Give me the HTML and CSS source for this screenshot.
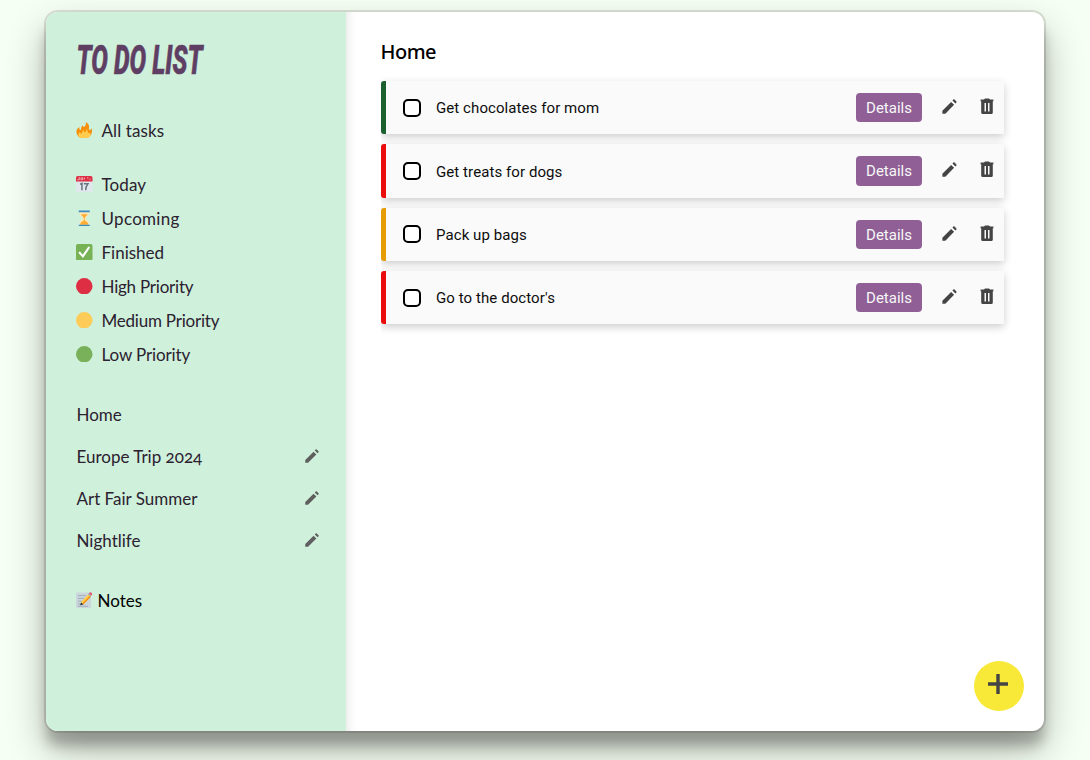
FILE: index.html
```html
<!DOCTYPE html>
<html lang="en">
<head>
<meta charset="utf-8">
<title>To Do List</title>
<link rel="stylesheet" href="styles.css">
</head>
<body>
<svg class="defs" width="0" height="0">
  <symbol id="pencil" viewBox="0 0 24 24"><path d="M20.71,7.04C21.1,6.65 21.1,6 20.71,5.63L18.37,3.29C18,2.9 17.35,2.9 16.96,3.29L15.700,4.550L19.450,8.300M3,17.25V21H6.75L17.81,9.93L14.06,6.18L3,17.25Z"/></symbol>
  <symbol id="trash" viewBox="0 0 18 18"><path fill-rule="evenodd" d="M2.600 1.500H6l1-1h4l1 1h3.400v1.800H2.600zM3.200 3.300h11.600v11.200a1.500 1.500 0 0 1-1.500 1.500H4.700a1.500 1.500 0 0 1-1.500-1.500zM6.500 5v8.500h1.500V5zM10 5v8.500h1.500V5z"/></symbol>
</svg>
<div class="app">
  <aside class="sidebar">
    <h1 class="logo"><svg width="132" height="40"><text x="-.5" y="34" textLength="126" lengthAdjust="spacingAndGlyphs">TO DO LIST</text></svg></h1>
    <ul class="filters">
      <li class="all"><svg class="emoji" viewBox="0 0 36 36"><path fill="#f4900c" d="M35 19c0-2-.5-4.300-1.300-6.300.2 3-1.300 5-3.700 4.600-3.400-.6-1-5-1.500-8.300C28 5 25 2 21 0c1.500 4 .5 7-1.500 9-2.500 2.500-4.500 1-4.500-2-4 3-4 7-4 9 0 2-3 2-3.500-.5-.3-1.500 0-3 .5-4.500C3 14 1 17 1 21c0 9 8 15 17 15s17-7 17-17z"/><path fill="#ffcc4d" d="M29 23c0 2-3 2-3 0 0-3-1-6-3-8 0 4-2 7-4 7-3 0-2-3-2-5-3 2-4 5-4 8-2 1-4-1-4-4-3 3-4 5-4 8 1 4 6 7 13 7s13-3 14-8c0-2-1-4-3-5z"/></svg><span>All tasks</span></li>
      <li class="today"><svg class="emoji" viewBox="0 0 36 36"><path fill="#e1e8ed" d="M0 9h36v23a4 4 0 0 1-4 4H4a4 4 0 0 1-4-4z"/><path fill="#dd2e44" d="M0 12V4a4 4 0 0 1 4-4h28a4 4 0 0 1 4 4v8z"/><path fill="none" stroke="#f5bec5" stroke-width="2" d="M7 2v6H3m8-5v5h3V3m4 0v5M24 4h3m2 3h3"/><path fill="none" stroke="#66757f" stroke-width="3.200" d="M9 18l4-2v15M17 17h9c-3 4-5 8-5 14"/></svg><span>Today</span></li>
      <li class="upcoming"><svg class="emoji" viewBox="0 0 36 36"><path fill="#ffe8b6" d="M8 4h20v4c0 5-7 7-7 10s7 5 7 10v4H8v-4c0-5 7-7 7-10S8 13 8 8z"/><path fill="#ffac33" d="M11 9h14c-1 4-6 5-6 9v5c3 2 8 4 8 9H9c0-5 5-7 8-9v-5c0-4-5-5-6-9z"/><path fill="#3b88c3" d="M6 1h24v4H6zM6 32h24v4H6z"/></svg><span>Upcoming</span></li>
      <li class="finished"><svg class="emoji" viewBox="0 0 36 36"><rect width="36" height="36" rx="4" fill="#77b255"/><path fill="none" stroke="#fff" stroke-width="4.500" stroke-linecap="round" d="M8 19l7 8L28 8"/></svg><span>Finished</span></li>
      <li class="high"><svg class="emoji" viewBox="0 0 36 36"><circle cx="18" cy="18" r="18" fill="#dd2e44"/></svg><span>High Priority</span></li>
      <li class="medium"><svg class="emoji" viewBox="0 0 36 36"><circle cx="18" cy="18" r="18" fill="#fdcb58"/></svg><span>Medium Priority</span></li>
      <li class="low"><svg class="emoji" viewBox="0 0 36 36"><circle cx="18" cy="18" r="18" fill="#78b159"/></svg><span>Low Priority</span></li>
    </ul>
    <ul class="projects">
      <li class="home"><span>Home</span></li>
      <li class="europe"><span>Europe Trip 2024</span><svg class="edit"><use href="#pencil"/></svg></li>
      <li class="art"><span>Art Fair Summer</span><svg class="edit"><use href="#pencil"/></svg></li>
      <li class="night"><span>Nightlife</span><svg class="edit"><use href="#pencil"/></svg></li>
    </ul>
    <div class="notes"><svg class="emoji" viewBox="0 0 36 36"><rect y="1" width="33" height="34" rx="3" fill="#ccd6dd"/><path stroke="#99aab5" stroke-width="2" d="M4 8h18M4 14h14M4 20h9M4 26h7M4 31h22"/><path fill="#ffcc4d" d="M11 22L27 5l5 5-16 17z"/><path fill="#f4900c" d="M14 25L30 8l2 3-16 16z"/><path fill="#ea596e" d="M28 3l2-2c3-1 6 2 5 5l-2 2z"/><path fill="#99aab5" d="M26 5l2-2 5 5-2 2z"/><path fill="#292f33" d="M9 29l2-6 5 4z"/></svg><span>Notes</span></div>
  </aside>
  <main class="content">
    <h2>Home</h2>
    <div class="tasks">
      <div class="task low-p"><i class="box"></i><span class="name">Get chocolates for mom</span><button>Details</button><svg class="pen"><use href="#pencil"/></svg><svg class="bin"><use href="#trash"/></svg></div>
      <div class="task high-p"><i class="box"></i><span class="name">Get treats for dogs</span><button>Details</button><svg class="pen"><use href="#pencil"/></svg><svg class="bin"><use href="#trash"/></svg></div>
      <div class="task medium-p"><i class="box"></i><span class="name">Pack up bags</span><button>Details</button><svg class="pen"><use href="#pencil"/></svg><svg class="bin"><use href="#trash"/></svg></div>
      <div class="task high-p"><i class="box"></i><span class="name">Go to the doctor's</span><button>Details</button><svg class="pen"><use href="#pencil"/></svg><svg class="bin"><use href="#trash"/></svg></div>
    </div>
    <div class="add"><svg width="20" height="20"><path d="M8.300 0h3.400v8.300H20v3.400h-8.300V20H8.300v-8.300H0V8.300h8.300z"/></svg></div>
  </main>
</div>
</body>
</html>
```
FILE: styles.css
```css
* { box-sizing: border-box; }
html { height: 100%; overflow: hidden; }
body { margin: 0; height: 760px; padding: 12px 46px; overflow: hidden; background: #f6fff3; font-family: Roboto, sans-serif; }
.defs { display: none; }
.app {
  display: flex; width: 998px; height: 719px; border-radius: 12px; background: #fff; overflow: hidden;
  box-shadow: 0 0 0 2px rgba(60, 50, 40, .15), 0 19px 38px rgba(0, 0, 0, .3), 0 15px 12px rgba(0, 0, 0, .22);
}
.sidebar { width: 300px; flex: none; padding: 28px 25px 0 30.500px; background: #cff0da; color: #2b2130; font: 400 17px Lato, sans-serif; }
.logo { margin: 0; height: 40px; }
.logo svg { display: block; overflow: visible; }
.logo text { font: italic 800 40px Roboto, sans-serif; fill: #5e3f63; stroke: #5e3f63; stroke-width: .7px; }
ul { list-style: none; margin: 0; padding: 0; }
.filters { padding-top: 33px; }
.filters li { display: flex; align-items: center; height: 34px; gap: 8.500px; }
.filters .all { margin-bottom: 20px; letter-spacing: .1px; }
.today { letter-spacing: .1px; }
.upcoming { letter-spacing: .3px; }
.finished { letter-spacing: 0; }
.high, .medium { letter-spacing: -.22px; }
.low { letter-spacing: -.12px; }
.emoji { width: 16.500px; height: 16.500px; flex: none; position: relative; left: -.5px; }
.projects { padding-top: 22px; }
.projects li { display: flex; align-items: center; justify-content: space-between; height: 42px; }
.europe span { font-variant-numeric: oldstyle-nums; }
.edit { width: 18px; height: 18px; fill: #5f5f5f; }
.notes { display: flex; align-items: center; gap: 4.500px; height: 34px; margin-top: 22px; color: #000; }
.content { flex: 1; position: relative; padding: 26px 40px 0 34.500px; box-shadow: inset 10px 0 10px -8px rgba(0, 0, 0, .1); }
h2 { margin: 0; font: 500 20px/27px "Noto Sans", sans-serif; letter-spacing: -.5px; }
.tasks { margin: 16px 0 0 .5px; padding-bottom: 14px; clip-path: inset(-10px -12px 0 0); }
.task {
  display: flex; align-items: center; height: 53.330px; margin-bottom: 10px; padding-left: 17px; padding-right: 8px;
  border-left: 5px solid; border-radius: 3px 0 0 3px; background: #fafafa; box-shadow: 0 3px 8px rgba(0, 0, 0, .2);
}
.low-p { border-color: #1d602f; }
.high-p { border-color: #eb0d0d; }
.medium-p { border-color: #e69d05; }
.box { width: 18px; height: 18px; border: 2px solid #000; border-radius: 5px; background: #fff; }
.name { flex: 1; margin-left: 15px; padding-top: 1.300px; font-size: 15px; letter-spacing: .08px; color: #0d0d0d; }
button { width: 66px; height: 29.300px; padding: 1px 0 0; border: 0; border-radius: 4px; background: #8f5f96; color: #f7f7f7; font: 15px Roboto, sans-serif; }
.pen { width: 19px; height: 19px; margin: -2px 19.500px 0 17.500px; fill: #444; }
.bin { width: 18px; height: 18px; margin-top: -1px; fill: #444; }
.add { position: absolute; right: 20px; bottom: 20px; width: 50px; height: 50px; border-radius: 50%; background: #f8e838; display: flex; align-items: center; justify-content: center; padding: 0 2px 4px 0; }
.add svg { fill: #444; }
```
